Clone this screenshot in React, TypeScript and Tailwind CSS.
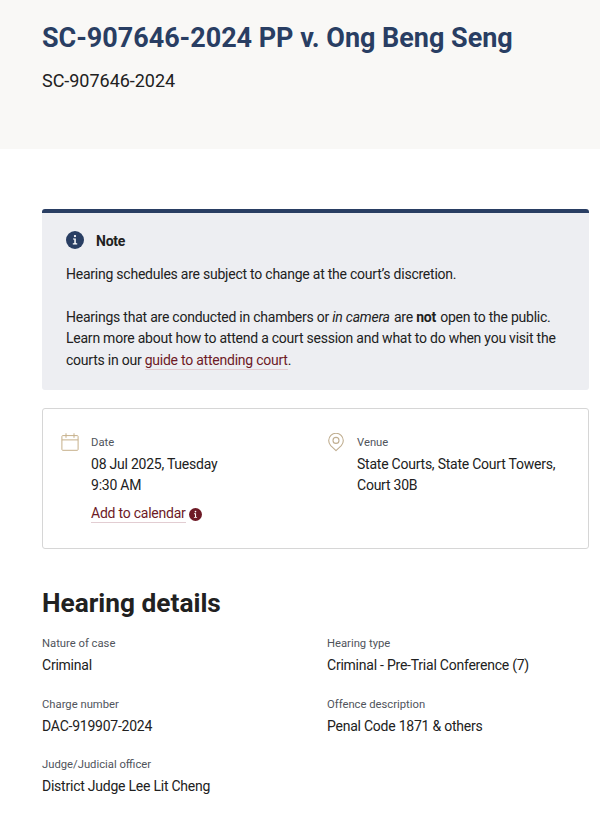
const details = [
  { label: "Nature of case", value: "Criminal" },
  { label: "Hearing type", value: "Criminal - Pre-Trial Conference (7)" },
  { label: "Charge number", value: "DAC-919907-2024" },
  { label: "Offence description", value: "Penal Code 1871 & others" },
  { label: "Judge/Judicial officer", value: "District Judge Lee Lit Cheng" },
]

const InfoIcon = ({ className }: { className: string }) => (
  <svg viewBox="0 0 18 18" className={className}>
    <circle cx="9" cy="9" r="9" fill="currentColor" />
    <circle cx="9" cy="5.1" r="1.15" fill="#fff" />
    <path d="M7 7.4h2.8v4.9h1.4v1.1H6.8v-1.1h1.5V8.5H7z" fill="#fff" />
  </svg>
)

const CalendarIcon = () => (
  <svg width="18" height="18" viewBox="0 0 18 18" fill="none" stroke="#c6b08a" strokeWidth="1">
    <rect x="0.9" y="2.6" width="16.2" height="14.7" rx="0.8" />
    <path d="M0.9 6.9h16.2M5 0.3v4.5M13 0.3v4.5" />
  </svg>
)

const PinIcon = () => (
  <svg width="16" height="19" viewBox="0 0 16 19" fill="none" stroke="#c0ae90" strokeWidth="1.1">
    <path d="M8 17.6L2.7 12.6a7.3 7.3 0 1 1 10.6 0z" strokeLinejoin="round" />
    <circle cx="8" cy="7.4" r="3" />
  </svg>
)

const HearingPage = () => {
  return (
    <div className="h-[814px] overflow-hidden bg-white font-[Roboto,sans-serif] text-[14px] leading-[21.5px] text-[#212121]">
      <header className="h-[149px] bg-[#f9f8f6] pl-[42px] pt-[20px]">
        <h1 className="text-[27px] font-bold leading-9 tracking-[-0.03px] text-[#293e63]">
          SC-907646-2024 PP v. Ong Beng Seng
        </h1>
        <p className="mt-3 text-[18px] leading-[26px] tracking-[-0.03px]">SC-907646-2024</p>
      </header>

      <main className="ml-[42px] mr-[11px] pt-[60px] tracking-[-0.235px]">
        <section className="h-[181px] rounded-[3px] border-t-4 border-[#293e63] bg-[#edeef2] px-6 pt-[17px]">
          <div className="flex gap-3">
            <InfoIcon className="mt-[1px] h-[18px] w-[18px] text-[#293e63]" />
            <h2 className="pt-[1px] font-bold">Note</h2>
          </div>
          <p className="mt-[11px]">Hearing schedules are subject to change at the court’s discretion.</p>
          <p className="mt-[21.5px] whitespace-nowrap">
            Hearings that are conducted in chambers or <em className="mr-[1px]">in camera</em> are{" "}
            <strong className="mr-[1px]">not</strong> open to the public.
            <br />
            Learn more about how to attend a court session and what to do when you visit the
            <br />
            courts in our{" "}
            <a className="border-b border-[#e2cdd2] pb-[1.5px] text-[#6d1a26]">guide to attending court</a>.
          </p>
        </section>

        <section className="mt-[18px] grid h-[141px] grid-cols-[266px_1fr] rounded-[3px] border border-[#d6d6d6] pl-[18px] pt-[24px]">
          <div className="flex gap-3">
            <CalendarIcon />
            <div>
              <p className="mt-[1px] text-[11.25px] leading-[18px] tracking-normal text-[#50545c]">Date</p>
              <p className="mt-[2px] leading-[21px]">08 Jul 2025, Tuesday</p>
              <p className="leading-[21px]">9:30 AM</p>
              <div className="mt-[8px] flex items-start gap-[3px]">
                <a className="border-b border-[#e2cdd2] leading-[18px] text-[#6d1a26]">Add to calendar</a>
                <InfoIcon className="mt-[4px] h-[13px] w-[13px] text-[#6d1a26]" />
              </div>
            </div>
          </div>
          <div className="flex gap-[13px] pl-[1px]">
            <PinIcon />
            <div>
              <p className="mt-[1px] text-[11.25px] leading-[18px] tracking-normal text-[#50545c]">Venue</p>
              <p className="mt-[2px] leading-[21px]">State Courts, State Court Towers,</p>
              <p className="leading-[21px]">Court 30B</p>
            </div>
          </div>
        </section>

        <h2 className="mt-[36px] text-[26.25px] font-bold leading-9 tracking-normal">Hearing details</h2>
        <dl className="mt-[14px] grid grid-cols-[285px_1fr] gap-y-[19px]">
          {details.map((item) => (
            <div key={item.label}>
              <dt className="text-[11.25px] leading-[18px] tracking-normal text-[#50545c]">{item.label}</dt>
              <dd className="mt-[2px]">{item.value}</dd>
            </div>
          ))}
        </dl>
      </main>
    </div>
  )
}

export default HearingPage
